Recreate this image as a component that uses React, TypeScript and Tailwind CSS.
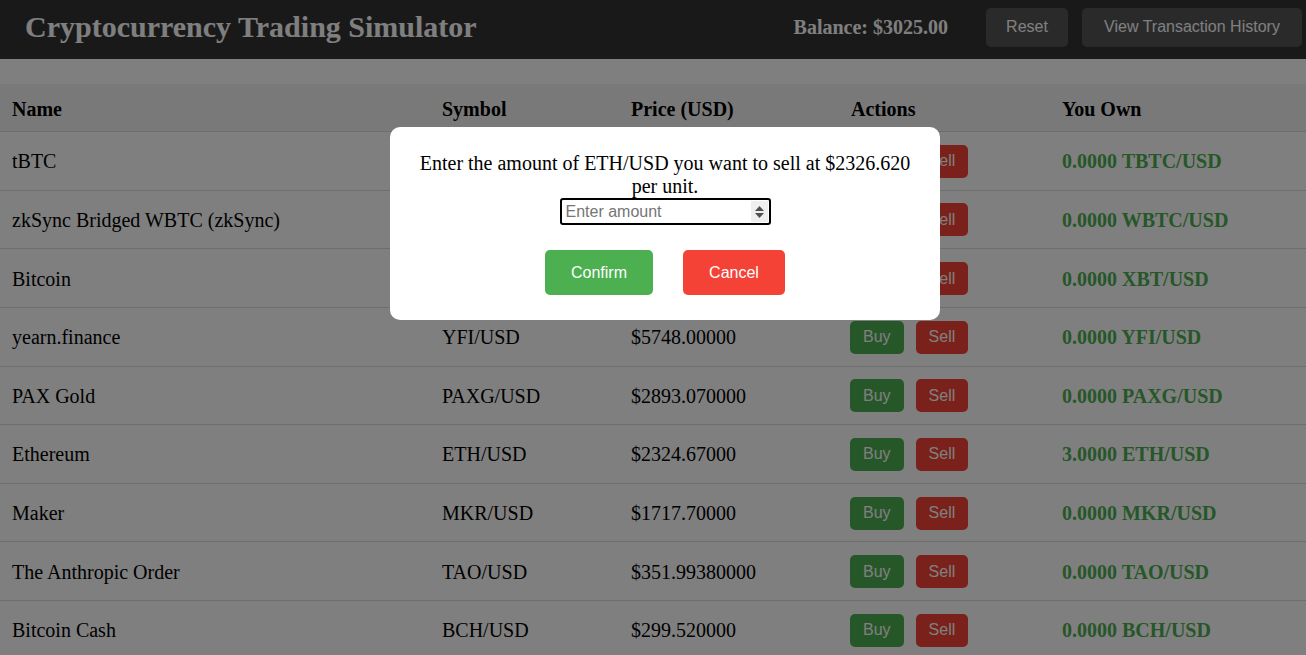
import React from "react";

type Row = { name: string; symbol: string; price: string; own: string };

const rows: Row[] = [
  { name: "tBTC", symbol: "TBTC/USD", price: "$96812.40000", own: "0.0000 TBTC/USD" },
  { name: "zkSync Bridged WBTC (zkSync)", symbol: "WBTC/USD", price: "$96540.10000", own: "0.0000 WBTC/USD" },
  { name: "Bitcoin", symbol: "XBT/USD", price: "$96420.50000", own: "0.0000 XBT/USD" },
  { name: "yearn.finance", symbol: "YFI/USD", price: "$5748.00000", own: "0.0000 YFI/USD" },
  { name: "PAX Gold", symbol: "PAXG/USD", price: "$2893.070000", own: "0.0000 PAXG/USD" },
  { name: "Ethereum", symbol: "ETH/USD", price: "$2324.67000", own: "3.0000 ETH/USD" },
  { name: "Maker", symbol: "MKR/USD", price: "$1717.70000", own: "0.0000 MKR/USD" },
  { name: "The Anthropic Order", symbol: "TAO/USD", price: "$351.99380000", own: "0.0000 TAO/USD" },
  { name: "Bitcoin Cash", symbol: "BCH/USD", price: "$299.520000", own: "0.0000 BCH/USD" },
];

const cols = "grid grid-cols-[430px_189px_220px_211px_1fr]";

export default function App() {
  return (
    <div
      className="relative h-[655px] w-full overflow-hidden bg-white text-black"
      style={{ fontFamily: '"Liberation Serif", "Times New Roman", serif' }}
    >
      <header className="flex h-[59px] items-center justify-between bg-[#333333] pb-[5px] pl-[25px] pr-[4px]">
        <h1 className="text-[30px] font-bold leading-[34px] text-white">
          Cryptocurrency Trading Simulator
        </h1>
        <div className="flex items-center">
          <span className="mr-[38px] text-[20px] font-bold text-white">Balance: $3025.00</span>
          <button className="mr-[14px] h-[39px] w-[82px] rounded-[5px] bg-[#555555] font-['Liberation_Sans',Arial,sans-serif] text-[16px] text-white">
            Reset
          </button>
          <button className="h-[39px] w-[220px] rounded-[5px] bg-[#555555] font-['Liberation_Sans',Arial,sans-serif] text-[16px] text-white">
            View Transaction History
          </button>
        </div>
      </header>

      <div className="mt-[25px] text-[20px]">
        <div className={`${cols} h-[48px] items-center border-b border-[#dddddd] bg-[#f2f2f2] pt-[2px] font-bold`}>
          <div className="px-[12px]">Name</div>
          <div className="px-[12px]">Symbol</div>
          <div className="px-[12px]">Price (USD)</div>
          <div className="px-[12px]">Actions</div>
          <div className="px-[12px]">You Own</div>
        </div>
        {rows.map((r) => (
          <div key={r.name} className={`${cols} h-[58.625px] items-center border-b border-[#dddddd] pt-[1px]`}>
            <div className="px-[12px]">{r.name}</div>
            <div className="px-[12px]">{r.symbol}</div>
            <div className="px-[12px]">{r.price}</div>
            <div className="flex gap-[12px] pl-[11px] font-['Liberation_Sans',Arial,sans-serif] text-[16px]">
              <button className="h-[33px] rounded-[5px] bg-[#4caf50] px-[13px] text-white">Buy</button>
              <button className="h-[33px] rounded-[5px] bg-[#f44336] px-[13px] text-white">Sell</button>
            </div>
            <div className="px-[12px] font-bold text-[#4caf50]">{r.own}</div>
          </div>
        ))}
      </div>

      <div className="fixed inset-0 bg-black/50">
        <div className="ml-[390px] mt-[127px] h-fit w-[550px] rounded-[10px] bg-white p-[25px] text-center">
          <p className="text-[20px] leading-[23px] text-black">
            Enter the amount of ETH/USD you want to sell at $2326.620 per unit.
          </p>
          <div className="relative mx-auto h-[27px] w-[211px] rounded-[3px] border-2 border-black bg-white">
            <input
              type="text"
              placeholder="Enter amount"
              className="h-full w-full bg-transparent pl-[4px] pr-[22px] font-['Liberation_Sans',Arial,sans-serif] text-[16px] text-black outline-none placeholder:text-[#757575]"
            />
            <div className="absolute right-[1px] top-[1px] flex h-[21px] w-[17px] flex-col items-center justify-center gap-[2px] bg-[#efefef]">
              <svg width="9" height="5" viewBox="0 0 9 5">
                <path d="M0 5 L4.5 0 L9 5 Z" fill="#505050" />
              </svg>
              <svg width="9" height="5" viewBox="0 0 9 5">
                <path d="M0 0 L9 0 L4.5 5 Z" fill="#505050" />
              </svg>
            </div>
          </div>
          <div className="mt-[25px] flex justify-center gap-[30px] font-['Liberation_Sans',Arial,sans-serif] text-[16px]">
            <button className="h-[45px] w-[108px] rounded-[5px] bg-[#4caf50] text-white">Confirm</button>
            <button className="h-[45px] w-[102px] rounded-[5px] bg-[#f44336] text-white">Cancel</button>
          </div>
        </div>
      </div>
    </div>
  );
}
